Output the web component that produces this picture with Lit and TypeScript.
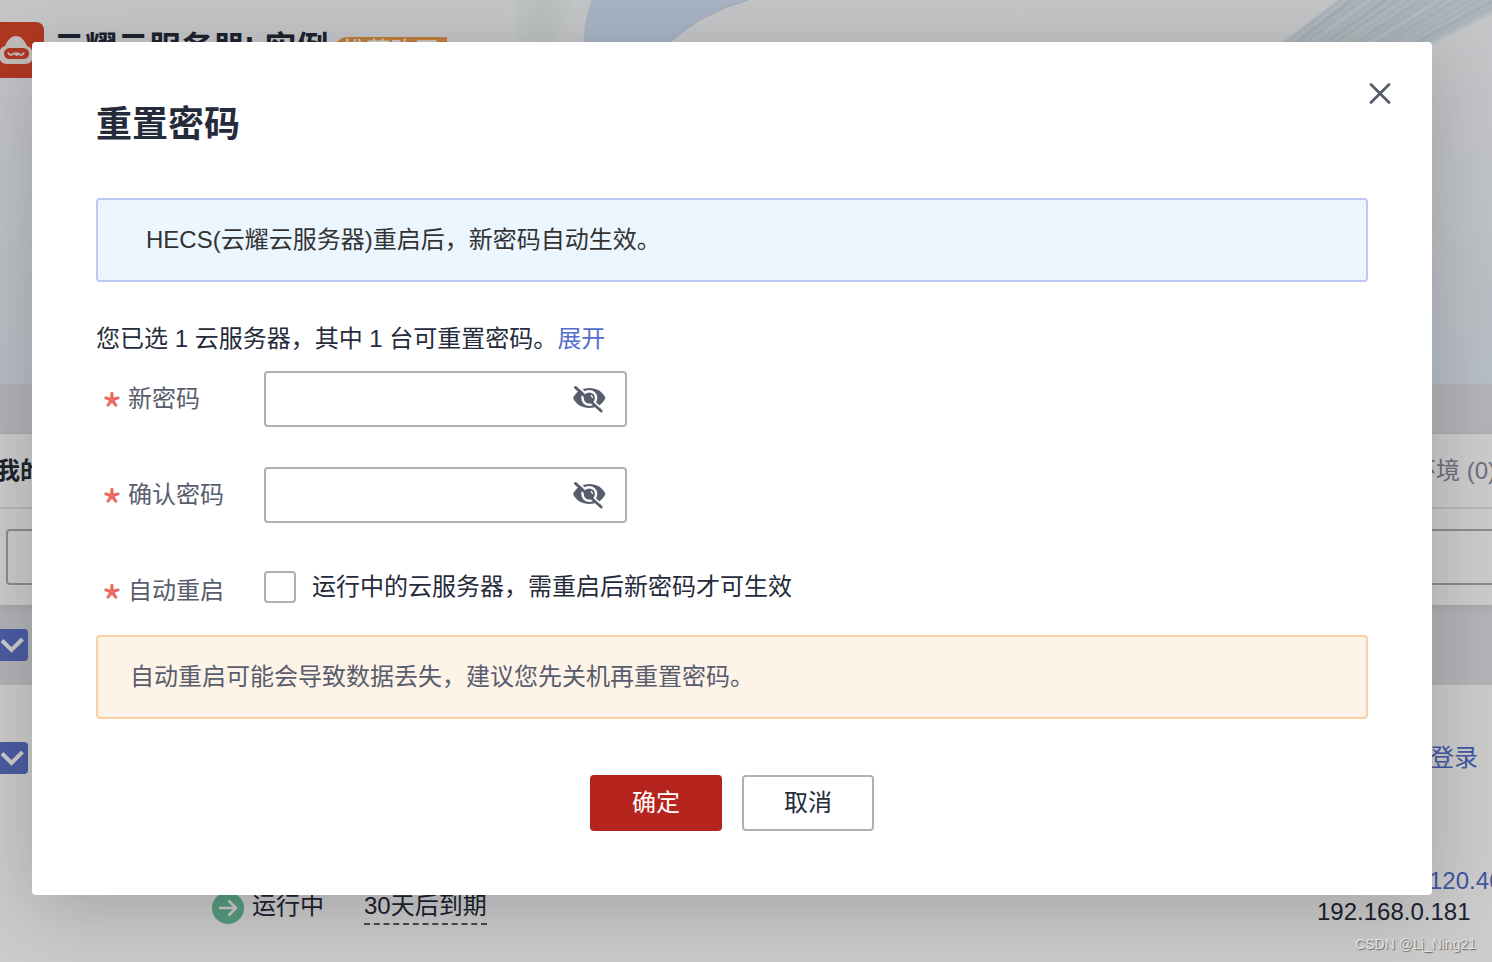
import { LitElement, html, css, svg } from "lit";
import { customElement, property, state } from "lit/decorators.js";

/** Tick box in the console style. */
@customElement("check-box")
class CheckBox extends LitElement {
  @property() label = "";
  @property({ type: Boolean }) checked = false;

  static styles = css`
    :host { display: block; }
    .wrap { display: grid; width: 32px; height: 32px; }
    .input, .tick { grid-area: 1 / 1; }
    .input {
      appearance: none;
      box-sizing: border-box;
      width: 32px;
      height: 32px;
      margin: 0;
      border-radius: 4px;
      background: #5e73cc;
    }
    .tick { pointer-events: none; }
  `;

  render() {
    return html`<span class="wrap">
      <input class="input" type="checkbox" aria-label=${this.label} .checked=${this.checked} />
      <svg class="tick" width="32" height="32" viewBox="0 0 32 32" fill="none" stroke="#fff" stroke-width="4">
        <path d="M6 11.5 15.5 21 26.5 10" />
      </svg>
    </span>`;
  }
}

/** Password box with a button that shows or hides its value. */
@customElement("password-field")
class PasswordField extends LitElement {
  @property() label = "";
  @state() private shown = false;

  static styles = css`
    :host { display: block; }
    .row { display: grid; grid-template-columns: 168px minmax(0, 363px); align-items: center; }
    .label { display: flex; align-items: center; gap: 8px; padding-left: 8px; color: #575d6c; line-height: 36px; }
    .star { width: 16px; height: 36px; color: #eb6b63; font: 46px/56px "Noto Sans CJK SC", sans-serif; display: flex; justify-content: center; }
    .box {
      display: flex;
      align-items: center;
      box-sizing: border-box;
      height: 56px;
      padding: 0 19px;
      border: 2px solid #adb0b8;
      border-radius: 4px;
    }
    .input { flex: 1; min-width: 0; border: 0; outline: 0; padding: 0; background: none; font: inherit; color: #252b3a; }
    .eye { display: flex; padding: 0; border: 0; background: none; cursor: pointer; }
  `;

  render() {
    return html`<div class="row">
      <label class="label" for="pw"><span class="star">*</span>${this.label}</label>
      <div class="box">
        <input class="input" id="pw" type=${this.shown ? "text" : "password"} />
        <button class="eye" type="button" aria-label="显示密码" @click=${() => (this.shown = !this.shown)}>
          <svg width="34" height="32" viewBox="0 0 34 32" fill="none">
            <path d="M1 15C4 8.500 10 5 17.300 5s13.300 3.500 16.200 10C30.600 21.500 24.600 25 17.300 25S4 21.500 1 15Z" fill="#575d6c" />
            <circle cx="17.300" cy="15" r="6.800" stroke="#fff" stroke-width="2.400" />
            <path d="M19 12.200a3.300 3.300 0 0 1 1.400 2.800" stroke="#fff" stroke-width="1.200" />
            <path d="M5 2.500 13 9.800" stroke="#fff" stroke-width="2.200" />
            <path d="M3.400 4.400 29.200 28" stroke="#575d6c" stroke-width="2.800" stroke-linecap="round" />
            <path d="M22.500 19 27 23.200" stroke="#fff" stroke-width="1.600" />
          </svg>
        </button>
      </div>
    </div>`;
  }
}

/** The instance list that lies behind the dialog. */
@customElement("instance-page")
class InstancePage extends LitElement {
  static styles = css`
    :host { display: block; height: 100%; overflow: hidden; background: #fff; }
    .hero {
      position: relative;
      box-sizing: border-box;
      height: 384px;
      padding-top: 22px;
      overflow: hidden;
      background: linear-gradient(#f7f8fa, #f2f5f8 45%, #e6eef8);
    }
    .art { position: absolute; top: 0; right: 0; }
    .heading { position: relative; display: flex; align-items: flex-start; margin-left: -12px; }
    .logo { display: block; border-radius: 8px; background: #dc462b; }
    .title { margin: 0 6px 0 9px; font-size: 32px; line-height: 52px; font-weight: 700; color: #252b3a; }
    .badge {
      margin-top: 15px;
      padding: 0 8px;
      border-radius: 12px 0 12px 0;
      background: #f09f4c;
      color: #fff;
      line-height: 28px;
    }
    .list { background: #dfe1e6; padding-top: 50px; }
    .card { background: #fff; box-shadow: 0 2px 8px rgba(37, 43, 58, 0.1); }
    .tabs {
      display: flex;
      justify-content: space-between;
      align-items: center;
      box-sizing: border-box;
      height: 75px;
      margin: 0 -4px;
      border-bottom: 2px solid #e6e7ee;
    }
    .tab { padding: 0; border: 0; background: none; font: inherit; white-space: pre; color: #8a8e99; }
    .current { font-weight: 700; color: #252b3a; }
    .search { padding: 20px 0 20px 6px; }
    .query {
      display: block;
      box-sizing: border-box;
      width: calc(100% + 8px);
      height: 56px;
      border: 2px solid #adb0b8;
      border-radius: 4px;
      background: none;
      font: inherit;
    }
    .head { padding: 24px 0; margin-left: -4px; }
    .rows { background: #fff; }
    .line { display: flex; justify-content: space-between; align-items: center; padding: 56px 14px 0 0; margin-left: -4px; }
    .link { color: #526ecc; text-decoration: none; line-height: 34px; }
    .detail { display: grid; grid-template-columns: 152px 1fr 175px; align-items: start; padding: 90px 0 120px 212px; }
    .status, .expiry { margin-top: 23px; line-height: 36px; color: #252b3a; }
    .status { display: flex; gap: 8px; }
    .dot { margin-top: 4px; }
    .until { display: inline-block; line-height: 34px; border-bottom: 2px dashed #575d6c; }
    .ips { line-height: 31px; white-space: nowrap; color: #252b3a; }
    .public { display: block; padding-left: 112px; line-height: 31px; }
  `;

  private streaks() {
    const tones = ["#c9d8ea", "#e0ecef", "#ccd6e2", "#dde6ee", "#cfdbe6", "#e4edf0", "#d2dae4", "#dcebec"];
    return Array.from({ length: 30 }, (_, i) => {
      const x = 600 + i * 5;
      const slope = 0.78 - i * 0.009;
      return svg`<path d=${`M${x - 24} 62L${x} 44L${x + 220} ${44 - 220 * slope}`} stroke=${tones[(i * 5) % 8]} stroke-width=${2 + (i % 3)} />`;
    });
  }

  render() {
    return html`
      <header class="hero">
        <svg class="art" width="1000" height="384" viewBox="0 0 1000 384" fill="none">
          <defs>
            <linearGradient id="leaf" x1="0" x2="1">
              <stop offset="0" stop-color="#eaf3f2" stop-opacity="0.4" />
              <stop offset="0.5" stop-color="#e6f1f0" />
              <stop offset="1" stop-color="#eaf3f4" stop-opacity="0.3" />
            </linearGradient>
            <filter id="soft"><feGaussianBlur stdDeviation="0.8" /></filter>
          </defs>
          <path d="M22 0H80L45 90H30Z" fill="url(#leaf)" />
          <path d="M100 0Q92 18 91 50L170 50Q204 14 256 0Z" fill="#d2e1f6" />
          <path d="M170 50Q204 14 256 0" stroke="#c0d0e8" />
          <g transform="translate(192 0)" filter="url(#soft)">
            <path d="M588 50 656 0H830V0L740 48 720 60H588Z" fill="#d9e1ea" />
            ${this.streaks()}
          </g>
        </svg>
        <div class="heading">
          <svg class="logo" width="56" height="56" viewBox="0 0 56 56">
            <path d="M17 24c2-5 6-10 11-10s9 5 11 10c4 1 6 5 6 9 0 6-3 9-8 9H19c-5 0-8-3-8-9 0-4 2-8 6-9Z" fill="#f4ece9" />
            <rect x="16" y="26" width="25" height="11" rx="5.500" fill="#dc462b" />
            <path d="M20 30.500c1 3 4 3 5.500 1h5c1.500 2 4.500 2 5.500-1M26 31l2.500 2 2.500-2" fill="none" stroke="#f4ece9" stroke-width="2" />
          </svg>
          <h1 class="title">云耀云服务器L实例</h1>
          <span class="badge">推荐购买</span>
        </div>
      </header>
      <main class="list">
        <section class="card">
          <nav class="tabs">
            <button class="tab current" type="button">我的</button>
            <button class="tab" type="button">环境 (0)</button>
          </nav>
          <div class="search"><input class="query" type="text" aria-label="搜索" /></div>
        </section>
        <div class="head"><check-box label="全选" checked></check-box></div>
        <section class="rows">
          <div class="line">
            <check-box label="选择" checked></check-box>
            <a class="link" href="#">登录</a>
          </div>
          <div class="detail">
            <div class="status">
              <svg class="dot" width="32" height="32" viewBox="0 0 32 32" fill="none">
                <circle cx="16" cy="16" r="16" fill="#6dc4a0" />
                <path d="M7 16H23M16.500 8.500 24 16l-7.500 7.500" stroke="#fff" stroke-width="2.600" />
              </svg>
              <span>运行中</span>
            </div>
            <div class="expiry"><span class="until">30天后到期</span></div>
            <div class="ips"><a class="link public" href="#">120.46</a>192.168.0.181</div>
          </div>
        </section>
      </main>
    `;
  }
}

@customElement("app-root")
class AppRoot extends LitElement {
  static styles = css`
    :host {
      display: block;
      position: relative;
      height: 100vh;
      min-height: 960px;
      overflow: hidden;
      font: 24px/36px "Liberation Sans", "Noto Sans CJK SC", sans-serif;
      color: #252b3a;
    }
    .mask { position: absolute; inset: 0; padding: 42px 60px 67px 32px; background: rgba(0, 0, 0, 0.2); }
    .dialog {
      position: relative;
      padding: 58px 64px 64px;
      border-radius: 4px;
      background: #fff;
      box-shadow: 0 16px 80px rgba(0, 0, 0, 0.2);
    }
    .title { margin: 0; font-size: 36px; line-height: 50px; font-weight: 700; }
    .close { position: absolute; top: 40px; right: 40px; display: flex; padding: 0; border: 0; background: none; cursor: pointer; }
    .notice { margin-top: 48px; padding: 22px 48px; border: 2px solid #bec8f5; border-radius: 4px; background: #ebf6ff; color: #333; }
    .summary { margin: 39px 0 14px; }
    .link { color: #526ecc; text-decoration: none; }
    .fields { display: grid; gap: 40px; }
    .restart { display: grid; grid-template-columns: 168px 1fr; align-items: center; height: 56px; }
    .label { display: flex; align-items: center; gap: 8px; padding-left: 8px; color: #575d6c; }
    .star { width: 16px; height: 36px; color: #eb6b63; font: 46px/56px "Noto Sans CJK SC", sans-serif; display: flex; justify-content: center; }
    .option { display: flex; align-items: center; gap: 16px; height: 48px; align-self: start; }
    .tick { appearance: none; box-sizing: border-box; width: 32px; height: 32px; margin: 0; border: 2px solid #adb0b8; border-radius: 4px; }
    .warning { margin-top: 16px; padding: 22px 32px; border: 2px solid #fad0a4; border-radius: 4px; background: #fef3e8; color: #575d6c; }
    .actions { display: flex; justify-content: center; gap: 20px; margin-top: 56px; }
    .button {
      box-sizing: border-box;
      width: 132px;
      height: 56px;
      padding: 0;
      border: 2px solid #adb0b8;
      border-radius: 4px;
      background: #fff;
      font: inherit;
      color: #252b3a;
      cursor: pointer;
    }
    .primary { border-color: #b5251d; background: #b5251d; color: #fff; }
    .credit {
      position: absolute;
      right: 16px;
      bottom: 8px;
      font-size: 14px;
      line-height: 20px;
      color: #e2e2e2;
      text-shadow: 1px 1px 1px #666;
    }
  `;

  render() {
    return html`
      <instance-page></instance-page>
      <div class="mask">
        <form class="dialog" role="dialog" aria-labelledby="title" @submit=${(e: Event) => e.preventDefault()}>
          <button class="close" type="button" aria-label="关闭">
            <svg width="24" height="24" viewBox="0 0 24 24" fill="none" stroke="#575d6c" stroke-width="2.800" stroke-linecap="round">
              <path d="M3 2.500 21 20.500M21 2.500 3 20.500" />
            </svg>
          </button>
          <h2 class="title" id="title">重置密码</h2>
          <div class="notice">HECS(云耀云服务器)重启后，新密码自动生效。</div>
          <p class="summary">您已选 1 云服务器，其中 1 台可重置密码。<a class="link" href="#">展开</a></p>
          <div class="fields">
            <password-field label="新密码"></password-field>
            <password-field label="确认密码"></password-field>
            <div class="restart">
              <div class="label"><span class="star">*</span>自动重启</div>
              <div class="option">
                <input class="tick" id="restart" type="checkbox" />
                <label for="restart">运行中的云服务器，需重启后新密码才可生效</label>
              </div>
            </div>
          </div>
          <div class="warning">自动重启可能会导致数据丢失，建议您先关机再重置密码。</div>
          <div class="actions">
            <button class="button primary" type="submit">确定</button>
            <button class="button" type="button">取消</button>
          </div>
        </form>
      </div>
      <div class="credit">CSDN @Li_Ning21</div>
    `;
  }
}
